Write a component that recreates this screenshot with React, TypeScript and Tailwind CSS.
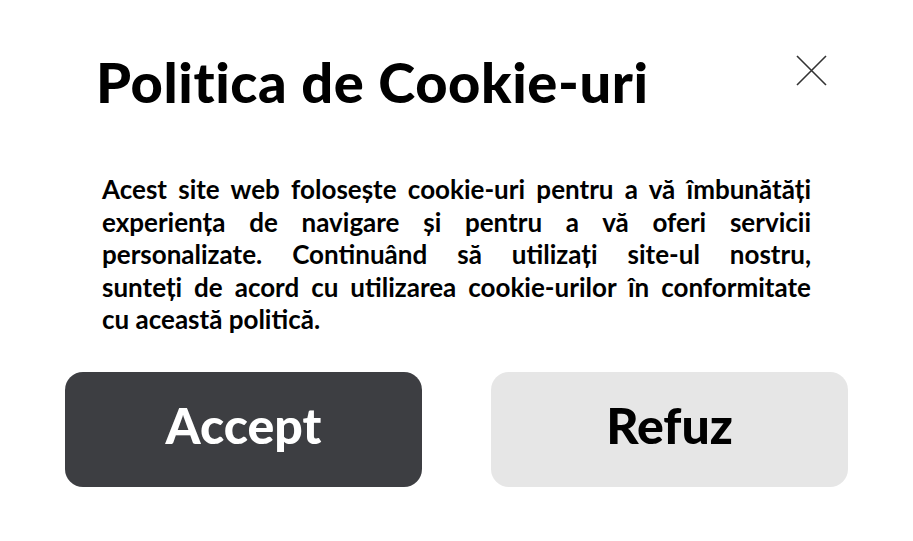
const lines = [
  'Acest site web folosește cookie-uri pentru a vă îmbunătăți',
  'experiența de navigare și pentru a vă oferi servicii',
  'personalizate. Continuând să utilizați site-ul nostru,',
  'sunteți de acord cu utilizarea cookie-urilor în conformitate',
];

export default function App() {
  return (
    <div
      className="w-[913px] h-[541px] bg-white flex flex-col text-black"
      style={{ fontFamily: 'Lato, "Open Sans", sans-serif' }}
    >
      {/* Header */}
      <div className="flex items-start justify-between pl-[96px] pr-[86px] pt-[52px]">
        <h1 className="text-[56px] leading-[60px] font-black tracking-[0.6px]">Politica de Cookie-uri</h1>
        <button className="mt-[3px] w-[31px] h-[31px] flex items-center justify-center">
          <svg width="31" height="31" viewBox="0 0 31 31">
            <path d="M1 1L30 30M30 1L1 30" stroke="#333" strokeWidth="1.6" fill="none" />
          </svg>
        </button>
      </div>

      {/* Body */}
      <div className="ml-[102px] w-[709px] mt-[61px] text-[26px] leading-[32.5px] font-bold">
        {lines.map((l) => (
          <p key={l} className="text-justify [text-align-last:justify]">
            {l}
          </p>
        ))}
        <p>cu această politică.</p>
      </div>

      {/* Actions */}
      <div className="flex gap-[69px] px-[65px] mt-[36px]">
        <button className="flex-1 h-[115px] rounded-[18px] bg-[#3d3e42] text-white text-[50px] font-black pb-[8px]">
          Accept
        </button>
        <button className="flex-1 h-[115px] rounded-[18px] bg-[#e6e6e6] text-black text-[50px] font-black pb-[8px]">
          Refuz
        </button>
      </div>
    </div>
  );
}
